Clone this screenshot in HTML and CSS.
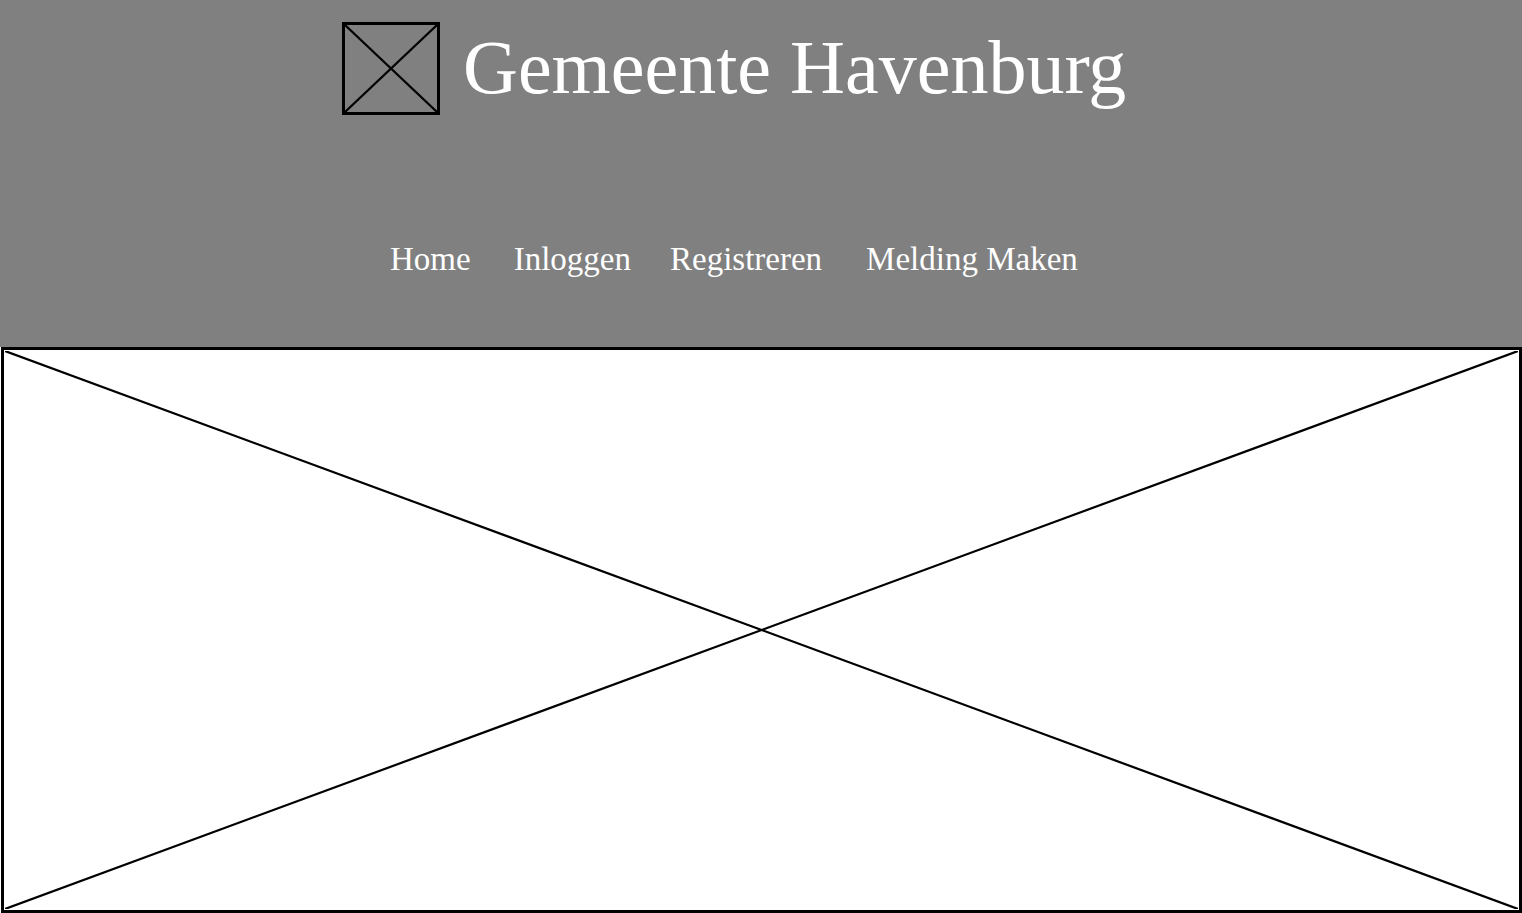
FILE: index.html
```html
<!DOCTYPE html>
<html lang="nl">
<head>
<meta charset="utf-8">
<title>Gemeente Havenburg</title>
<link rel="stylesheet" href="styles.css">
</head>
<body>
<header class="site-header">
  <div class="brand">
    <div class="logo">
      <svg class="cross" viewBox="0 0 100 100" preserveAspectRatio="none">
        <line x1="0" y1="0" x2="100" y2="100" vector-effect="non-scaling-stroke"/>
        <line x1="100" y1="0" x2="0" y2="100" vector-effect="non-scaling-stroke"/>
      </svg>
    </div>
    <h1 class="title">Gemeente Havenburg</h1>
  </div>
  <nav class="nav">
    <a class="nav-link nav-home" href="#">Home</a>
    <a class="nav-link" href="#">Inloggen</a>
    <a class="nav-link nav-wide" href="#">Registreren</a>
    <a class="nav-link" href="#">Melding Maken</a>
  </nav>
</header>
<main class="hero">
  <svg class="cross" viewBox="0 0 100 100" preserveAspectRatio="none">
    <line x1="0" y1="0" x2="100" y2="100" vector-effect="non-scaling-stroke"/>
    <line x1="100" y1="0" x2="0" y2="100" vector-effect="non-scaling-stroke"/>
  </svg>
</main>
</body>
</html>
```

FILE: styles.css
```css
html, body {
  margin: 0;
  padding: 0;
  background: #ffffff;
}

body {
  font-family: "Liberation Serif", "Times New Roman", serif;
  overflow: hidden;
}

.site-header {
  box-sizing: border-box;
  height: 347px;
  background: #808080;
  padding-top: 22px;
  display: flex;
  flex-direction: column;
}

.brand {
  display: flex;
  align-items: center;
  padding-left: 342px;
  gap: 23px;
  height: 93px;
}

.logo {
  box-sizing: border-box;
  width: 98px;
  height: 93px;
  border: 3px solid #000;
  flex: none;
}

.cross {
  display: block;
  width: 100%;
  height: 100%;
}

.cross line {
  stroke: #000;
  stroke-width: 2.2px;
}

.title {
  margin: 0;
  font-weight: normal;
  font-size: 76px;
  line-height: 1;
  color: #ffffff;
  margin-top: -3px;
}

.nav {
  display: flex;
  padding-left: 390px;
  margin-top: 128px;
  gap: 39px;
}

.nav-link {
  color: #ffffff;
  text-decoration: none;
  font-size: 33px;
  line-height: 1;
}

.nav-home {
  margin-right: 4px;
}

.nav-wide {
  margin-right: 5px;
}

.hero {
  box-sizing: border-box;
  display: block;
  margin: 0 0 0 1px;
  height: 566px;
  border: 3px solid #000;
  padding: 1px;
}
```
